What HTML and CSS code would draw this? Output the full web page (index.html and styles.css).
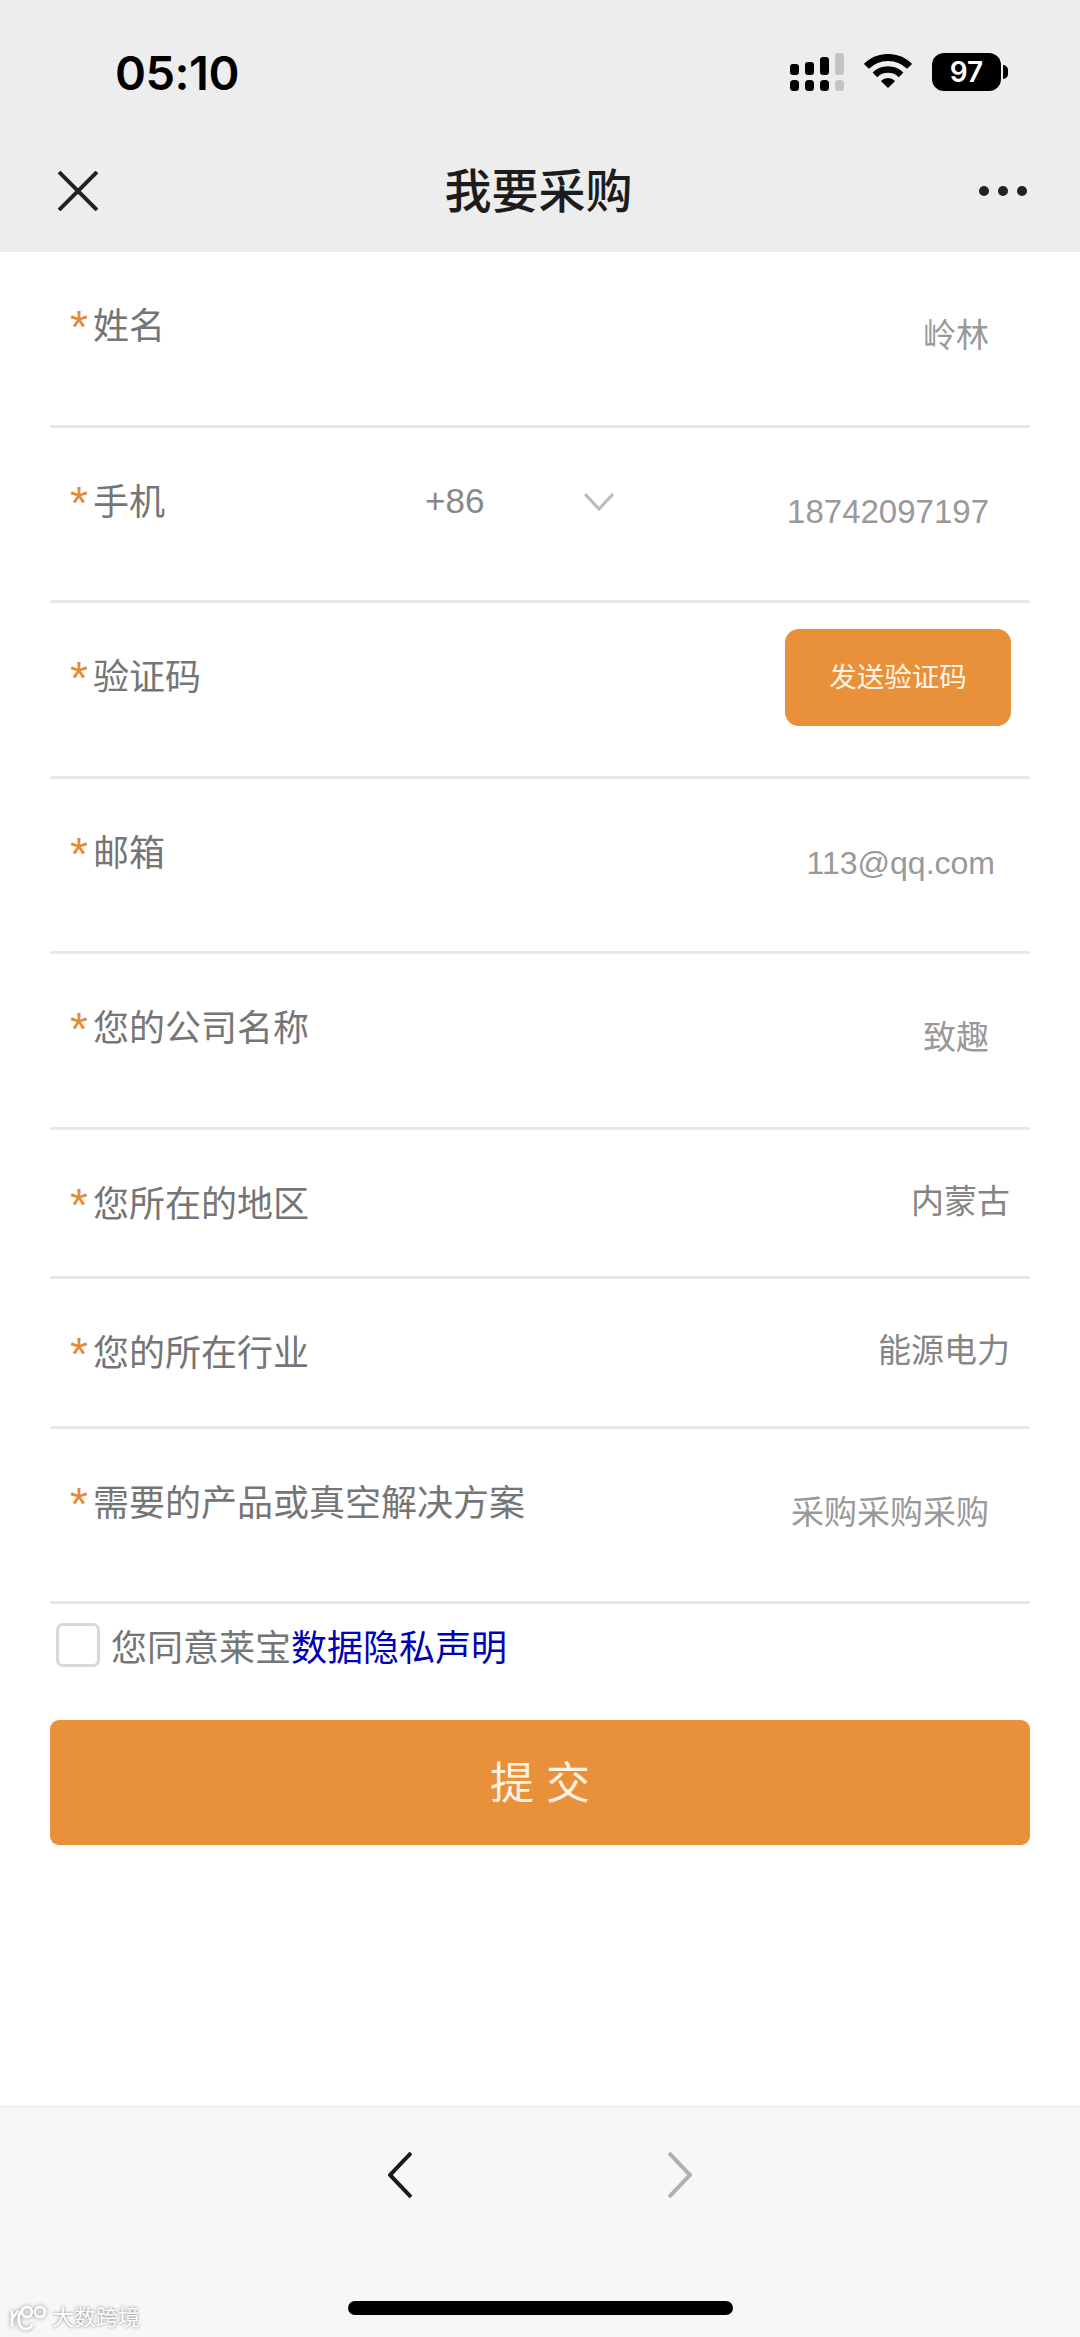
FILE: index.html
```html
<!DOCTYPE html>
<html lang="zh-CN">
<head>
    <meta charset="utf-8"/>
    <title>我要采购</title>
    <link rel="stylesheet" href="styles.css">
</head>
<body>
<header class="topBar">
    <div class="statusBar">
        <span class="clock">05:10</span>
        <div class="statusIcons">
            <svg class="signal" width="54" height="38" viewBox="0 0 54 38">
                <rect x="0" y="11" width="9" height="11" rx="3"/>
                <rect x="15" y="9" width="9" height="13" rx="3"/>
                <rect x="30" y="4" width="9" height="18" rx="3"/>
                <rect class="signalOff" x="45" y="0" width="9" height="22" rx="3"/>
                <rect x="0" y="27" width="9" height="11" rx="3.5"/>
                <rect x="15" y="27" width="9" height="11" rx="3.5"/>
                <rect x="30" y="27" width="9" height="11" rx="3.5"/>
                <rect class="signalOff" x="45" y="27" width="9" height="11" rx="3.5"/>
            </svg>
            <svg class="wifi" width="48" height="36" viewBox="0 0 48 36">
                <path class="wifiBand" stroke-width="7" d="M2.4 12.4A30.5 30.5 0 0 1 45.6 12.4"/>
                <path class="wifiBand" stroke-width="6.5" d="M10.9 20.9A18.5 18.5 0 0 1 37.1 20.9"/>
                <path d="M24 34L16.9 26.9A10 10 0 0 1 31.1 26.9Z"/>
            </svg>
            <div class="battery"><span class="batteryNum">97</span></div>
            <span class="batteryNub"></span>
        </div>
    </div>
    <nav class="navBar">
        <svg class="closeIcon" width="40" height="40" viewBox="0 0 40 40">
            <path d="M1 1L39 39M39 1L1 39"/>
        </svg>
        <h1 class="pageTitle">我要采购</h1>
        <div class="moreDots"><i></i><i></i><i></i></div>
    </nav>
</header>

<form class="buyForm">
    <div class="row">
        <span class="label"><b>*</b>姓名</span>
        <span class="val">岭林</span>
    </div>
    <div class="row">
        <span class="label phoneLabel"><b>*</b>手机</span>
        <span class="dialCode">+86</span>
        <svg class="dialArrow" width="30" height="18" viewBox="0 0 30 18">
            <path d="M1 1L15 16L29 1"/>
        </svg>
        <span class="val">18742097197</span>
    </div>
    <div class="row">
        <span class="label"><b>*</b>验证码</span>
        <button type="button" class="sendCode">发送验证码</button>
    </div>
    <div class="row">
        <span class="label"><b>*</b>邮箱</span>
        <span class="val emailVal">113@qq.com</span>
    </div>
    <div class="row">
        <span class="label"><b>*</b>您的公司名称</span>
        <span class="val">致趣</span>
    </div>
    <div class="row shortRow">
        <span class="label"><b>*</b>您所在的地区</span>
        <span class="val pickVal">内蒙古</span>
    </div>
    <div class="row shortRow">
        <span class="label"><b>*</b>您的所在行业</span>
        <span class="val pickVal">能源电力</span>
    </div>
    <div class="row">
        <span class="label"><b>*</b>需要的产品或真空解决方案</span>
        <span class="val">采购采购采购</span>
    </div>
    <div class="agree">
        <span class="checkBox"></span>
        <span class="agreeText">您同意莱宝<a class="agreeLink">数据隐私声明</a></span>
    </div>
    <button type="button" class="submitBtn">提 交</button>
</form>

<footer class="toolBar">
    <div class="arrows">
        <svg class="arrow" width="24" height="46" viewBox="0 0 24 46">
            <path d="M23 1L2 23L23 45"/>
        </svg>
        <svg class="arrow arrowOff" width="24" height="46" viewBox="0 0 24 46">
            <path d="M1 1L22 23L1 45"/>
        </svg>
    </div>
    <div class="homeBar"></div>
</footer>

<div class="stamp">
    <svg class="stampLogo" width="38" height="27" viewBox="0 0 38 27">
        <path d="M2 6V22M2 14L8 6"/>
        <path d="M11 6C7 12 8 24 16 24C20 24 22 21 22 19"/>
        <circle cx="17" cy="7" r="5"/>
        <circle cx="30" cy="7" r="5"/>
    </svg>
    <span class="stampText">大数跨境</span>
</div>
</body>
</html>
```

FILE: styles.css
```css
*{
    box-sizing: border-box;
}
html, body{
    margin: 0;
    padding: 0;
}
body{
    position: relative;
    width: 1080px;
    height: 2337px;
    display: flex;
    flex-direction: column;
    background: #fff;
    font-family: "Liberation Sans", "Noto Sans CJK SC", sans-serif;
    overflow: hidden;
}

/* top bar */
.topBar{
    height: 252px;
    background: #ededed;
}
.statusBar{
    height: 130px;
    padding: 50px 72px 36px 115px;
    display: flex;
    justify-content: space-between;
    align-items: center;
}
.clock{
    font-family: "Inter", sans-serif;
    font-size: 47px;
    font-weight: 600;
    letter-spacing: -0.5px;
    color: #000;
}
.statusIcons{
    display: flex;
    align-items: center;
}
.signal{
    margin-right: 20px;
}
.signalOff{
    fill: #c4c4c4;
}
.wifi{
    margin-right: 20px;
}
.wifiBand{
    fill: none;
    stroke: #000;
}
.battery{
    width: 69px;
    height: 38px;
    border-radius: 12px;
    background: #000;
    display: flex;
    align-items: center;
    justify-content: center;
}
.batteryNum{
    color: #fff;
    font-family: "Inter", sans-serif;
    font-size: 28px;
    font-weight: 600;
}
.batteryNub{
    width: 5px;
    height: 14px;
    margin-left: 2px;
    background: #000;
    border-radius: 0 7px 7px 0;
}
.navBar{
    height: 122px;
    padding: 0 53px 0 58px;
    display: flex;
    align-items: center;
    justify-content: space-between;
}
.closeIcon path{
    fill: none;
    stroke: #222;
    stroke-width: 4;
}
.pageTitle{
    margin: -8px 0 0 0;
    font-size: 47px;
    font-weight: 500;
    color: #1c1c1c;
}
.moreDots{
    display: flex;
    gap: 9px;
}
.moreDots i{
    width: 10px;
    height: 10px;
    border-radius: 50%;
    background: #222;
}

/* form rows */
.buyForm{
    flex: 1;
    padding: 0 50px;
}
.row{
    height: 175.5px;
    display: flex;
    align-items: flex-start;
    border-bottom: 3px solid #e8e8e8;
}
.shortRow{
    height: 149.5px;
}
.label{
    padding: 50px 0 0 20px;
    font-size: 36px;
    line-height: 50px;
    color: #757575;
}
.label b{
    display: inline-block;
    width: 23px;
    font-size: 46px;
    line-height: 0;
    vertical-align: -4px;
    font-weight: 400;
    color: #e58a32;
}
.phoneLabel{
    width: 375px;
}
.val{
    margin-left: auto;
    padding: 59px 41px 0 0;
    font-size: 33px;
    line-height: 50px;
    color: #999;
}
.emailVal{
    padding-right: 35px;
    font-size: 32px;
}
.pickVal{
    padding: 47px 20px 0 0;
    color: #858585;
}
.dialCode{
    padding-top: 48px;
    font-size: 35px;
    line-height: 50px;
    color: #888;
}
.dialArrow{
    margin: 65px 0 0 100px;
}
.dialArrow path{
    fill: none;
    stroke: #bbb;
    stroke-width: 3;
}
.sendCode{
    margin: 26px 19px 0 auto;
    width: 226px;
    height: 97px;
    padding: 0 0 5px;
    border: 0;
    border-radius: 14px;
    background: #e8913a;
    color: #fff3e6;
    font-family: inherit;
    font-size: 27.5px;
}

/* agreement and submit */
.agree{
    height: 116px;
    padding: 19px 0 0 6px;
    display: flex;
    align-items: flex-start;
}
.checkBox{
    width: 44px;
    height: 44px;
    border: 3px solid #d8d8d8;
    border-radius: 7px;
}
.agreeText{
    margin: 3px 0 0 11px;
    font-size: 36px;
    line-height: 46px;
    color: #757575;
}
.agreeLink{
    color: #0000b4;
}
.submitBtn{
    display: block;
    width: 100%;
    height: 125px;
    padding: 0 0 6px;
    border: 0;
    border-radius: 9px;
    background: #e8913a;
    color: #fff3e6;
    font-family: inherit;
    font-size: 44px;
}

/* bottom tool bar */
.toolBar{
    height: 231px;
    padding-top: 45px;
    border-top: 1px solid #e6e6e6;
    background: #f7f7f7;
    display: flex;
    flex-direction: column;
    align-items: center;
}
.arrows{
    display: flex;
    gap: 256px;
}
.arrow path{
    fill: none;
    stroke: #1a1a1a;
    stroke-width: 4;
}
.arrowOff path{
    stroke: #b0b0b0;
}
.homeBar{
    width: 385px;
    height: 14px;
    margin-top: 103px;
    border-radius: 7px;
    background: #000;
}

/* watermark over the corner of the tool bar */
.stamp{
    position: absolute;
    left: 10px;
    bottom: 5px;
    display: flex;
    align-items: center;
    gap: 4px;
}
.stampLogo{
    filter: drop-shadow(0 0 2px #888);
}
.stampLogo path, .stampLogo circle{
    fill: none;
    stroke: #fff;
    stroke-width: 2.5;
}
.stampText{
    font-size: 22px;
    line-height: 28px;
    color: #fff;
    text-shadow: 0 0 3px #777;
}
```
